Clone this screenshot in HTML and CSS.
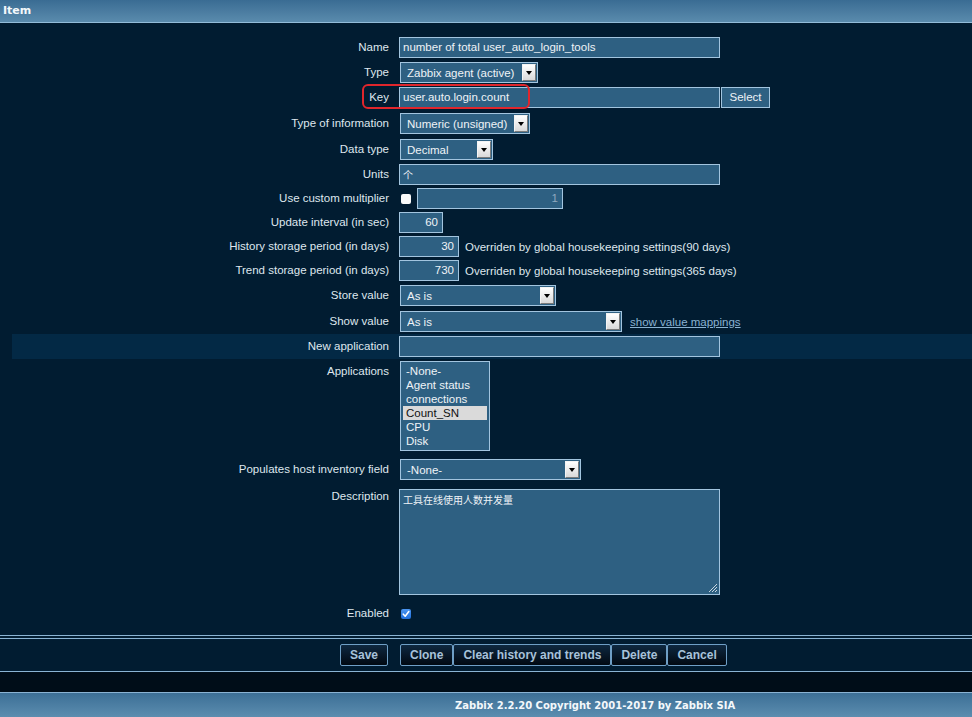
FILE: index.html
```html
<!DOCTYPE html>
<html lang="en">
<head>
<meta charset="utf-8">
<title>Item</title>
<link rel="stylesheet" href="styles.css">
</head>
<body>
<div class="header">Item</div>
<div class="form">
  <div class="row h25">
    <div class="lbl">Name</div>
    <div class="ctl"><div class="inp wide">number of total user_auto_login_tools</div></div>
  </div>
  <div class="row h25">
    <div class="lbl">Type</div>
    <div class="ctl"><div class="sel w138"><span>Zabbix agent (active)</span><span class="arr"><i></i></span></div></div>
  </div>
  <div class="row h26 key">
    <div class="lbl">Key</div>
    <div class="ctl"><div class="inp wide">user.auto.login.count</div><div class="btn-sel">Select</div></div>
    <div class="mark"></div>
  </div>
  <div class="row h26">
    <div class="lbl">Type of information</div>
    <div class="ctl"><div class="sel w130"><span>Numeric (unsigned)</span><span class="arr"><i></i></span></div></div>
  </div>
  <div class="row h25">
    <div class="lbl">Data type</div>
    <div class="ctl"><div class="sel w93"><span>Decimal</span><span class="arr"><i></i></span></div></div>
  </div>
  <div class="row h24">
    <div class="lbl">Units</div>
    <div class="ctl"><div class="inp wide"><span class="cjk">个</span></div></div>
  </div>
  <div class="row h24">
    <div class="lbl">Use custom multiplier</div>
    <div class="ctl"><span class="cb"></span><div class="inp num w146 dis">1</div></div>
  </div>
  <div class="row h24">
    <div class="lbl">Update interval (in sec)</div>
    <div class="ctl"><div class="inp num w44">60</div></div>
  </div>
  <div class="row h24">
    <div class="lbl">History storage period (in days)</div>
    <div class="ctl"><div class="inp num w60">30</div><span class="note">Overriden by global housekeeping settings(90 days)</span></div>
  </div>
  <div class="row h25">
    <div class="lbl">Trend storage period (in days)</div>
    <div class="ctl"><div class="inp num w60">730</div><span class="note">Overriden by global housekeeping settings(365 days)</span></div>
  </div>
  <div class="row h26">
    <div class="lbl">Store value</div>
    <div class="ctl"><div class="sel w156"><span>As is</span><span class="arr"><i></i></span></div></div>
  </div>
  <div class="row h25">
    <div class="lbl">Show value</div>
    <div class="ctl"><div class="sel w222"><span>As is</span><span class="arr"><i></i></span></div><a class="link" href="#">show value mappings</a></div>
  </div>
  <div class="row h25 hl">
    <div class="lbl">New application</div>
    <div class="ctl"><div class="inp wide"></div></div>
  </div>
  <div class="row h98">
    <div class="lbl lbl-apps">Applications</div>
    <div class="ctl tall">
      <div class="list">
        <div class="opt">-None-</div>
        <div class="opt">Agent status</div>
        <div class="opt">connections</div>
        <div class="opt on">Count_SN</div>
        <div class="opt">CPU</div>
        <div class="opt">Disk</div>
      </div>
    </div>
  </div>
  <div class="row h30">
    <div class="lbl">Populates host inventory field</div>
    <div class="ctl"><div class="sel w181"><span>-None-</span><span class="arr"><i></i></span></div></div>
  </div>
  <div class="row h114">
    <div class="lbl lbl-desc">Description</div>
    <div class="ctl tall">
      <div class="area"><span class="cjk">工具在线使用人数并发量</span>
        <svg class="grip" width="10" height="10" viewBox="0 0 10 10"><path d="M9 1L1 9M9 4L4 9M9 7L7 9" stroke="#c9d6e0" stroke-width="1"/></svg>
      </div>
    </div>
  </div>
  <div class="row h24">
    <div class="lbl">Enabled</div>
    <div class="ctl"><span class="cb on"><svg width="10" height="10" viewBox="0 0 10 10"><path d="M2.3 5.2L4.2 7.2L7.8 2.6" fill="none" stroke="#fff" stroke-width="1.6" stroke-linecap="round" stroke-linejoin="round"/></svg></span></div>
  </div>
</div>
<div class="sep"></div>
<div class="btnbar">
  <span class="b">Save</span>
  <div class="bgroup">
    <span class="b">Clone</span><span class="b">Clear history and trends</span><span class="b">Delete</span><span class="b">Cancel</span>
  </div>
</div>
<div class="dark"></div>
<div class="footer">Zabbix 2.2.20 Copyright 2001-2017 by Zabbix SIA</div>
</body>
</html>
```
FILE: styles.css
```css
html, body {
  margin: 0;
  padding: 0;
}
body {
  width: 972px;
  height: 717px;
  overflow: hidden;
  background: #011c31;
  font-family: "Liberation Sans", Arial, sans-serif;
  font-size: 11.5px;
  color: #dfe7ee;
}
.header {
  height: 22px;
  line-height: 22px;
  padding-left: 3px;
  background: linear-gradient(#3a6c93, #5a8bad);
  border-bottom: 1px solid #93bcd9;
  color: #f4f8fb;
  font-family: "DejaVu Sans", sans-serif;
  font-weight: bold;
  font-size: 11px;
}
.form {
  padding: 12px 0 10px 12px;
}
.row {
  display: flex;
  align-items: flex-start;
  box-sizing: border-box;
  padding-top: 2px;
  position: relative;
}
.h24 { height: 24px; }
.h25 { height: 25px; }
.h26 { height: 26px; }
.h30 { height: 30px; }
.h98 { height: 98px; }
.h114 { height: 114px; }
.hl { background: #032945; }
.lbl {
  flex: none;
  width: 377px;
  text-align: right;
  line-height: 21px;
  white-space: nowrap;
}
.lbl-apps { line-height: 13px; padding-top: 4px; }
.lbl-desc { line-height: 13px; padding-top: 1px; }
.ctl {
  margin-left: 10px;
  display: flex;
  align-items: center;
  height: 21px;
}
.ctl.tall {
  height: auto;
  align-items: flex-start;
}
.inp {
  box-sizing: border-box;
  height: 21px;
  border: 1px solid #a3c5df;
  background: #2e6082;
  color: #eef3f7;
  padding: 0 3px;
  line-height: 19px;
  white-space: nowrap;
}
.wide { width: 321px; }
.w44 { width: 44px; }
.w60 { width: 60px; }
.w146 { width: 146px; margin-left: 6px; }
.num { text-align: right; padding-right: 4px; }
.dis { color: #8ea9bf; }
.cjk {
  font-family: "Noto Sans CJK SC", sans-serif;
  font-size: 10px;
}
.btn-sel {
  box-sizing: border-box;
  width: 49px;
  height: 21px;
  margin-left: 1px;
  border: 1px solid #a3c5df;
  background: #2e6082;
  color: #eef3f7;
  text-align: center;
  line-height: 19px;
}
.mark {
  position: absolute;
  left: 350px;
  top: -1px;
  width: 168px;
  height: 25px;
  box-sizing: border-box;
  border: 2px solid #e0262c;
  border-radius: 6px;
}
.sel {
  box-sizing: border-box;
  height: 21px;
  margin-left: 1px;
  display: flex;
  align-items: center;
  border: 1px solid #a3c5df;
  background: #2e6082;
  color: #eef3f7;
  padding-left: 6px;
  white-space: nowrap;
}
.sel span:first-child { flex: 1; overflow: hidden; }
.w93 { width: 93px; }
.w130 { width: 130px; }
.w138 { width: 138px; }
.w156 { width: 156px; }
.w181 { width: 181px; }
.w222 { width: 222px; }
.arr {
  flex: none;
  box-sizing: border-box;
  width: 14px;
  height: 17px;
  margin-right: 1px;
  background: linear-gradient(#ffffff, #d9d9d9);
  border: 1px solid;
  border-color: #f4f4f4 #7a7a7a #7a7a7a #f4f4f4;
  display: flex;
  align-items: center;
  justify-content: center;
}
.arr i {
  display: block;
  width: 0;
  height: 0;
  border-left: 3px solid transparent;
  border-right: 3px solid transparent;
  border-top: 4px solid #000;
}
.note { margin-left: 6px; white-space: nowrap; }
.link {
  margin-left: 8px;
  color: #8ab2d2;
  text-decoration: underline;
}
.cb {
  box-sizing: border-box;
  display: inline-block;
  width: 10px;
  height: 10px;
  margin-left: 2px;
  border-radius: 2px;
  background: #fafafa;
}
.cb.on {
  background: linear-gradient(#4b95f0, #1f6fdc);
}
.cb svg { display: block; }
.list {
  box-sizing: border-box;
  width: 90px;
  height: 90px;
  margin-left: 1px;
  border: 1px solid #a3c5df;
  background: #2e6082;
  padding: 2px 2px;
  color: #eef3f7;
}
.opt {
  height: 14px;
  line-height: 14px;
  padding-left: 3px;
  white-space: nowrap;
}
.opt.on {
  background: #dadada;
  color: #111;
}
.area {
  position: relative;
  box-sizing: border-box;
  width: 321px;
  height: 106px;
  border: 1px solid #a3c5df;
  background: #2e6082;
  color: #eef3f7;
  padding: 3px 3px;
  line-height: 14px;
}
.grip {
  position: absolute;
  right: 1px;
  bottom: 1px;
}
.sep {
  height: 2px;
  border-top: 1px solid #8ab3d3;
}
.btnbar {
  box-sizing: border-box;
  height: 34px;
  border-top: 1px solid #8ab3d3;
  border-bottom: 1px solid #8ab3d3;
  padding: 5px 0 0 340px;
  display: flex;
  align-items: flex-start;
}
.bgroup {
  display: flex;
  margin-left: 12px;
}
.b {
  box-sizing: border-box;
  height: 22px;
  line-height: 20px;
  padding: 0 9px;
  border: 1px solid #6f9fc6;
  border-radius: 2px;
  background: linear-gradient(#0e2840, #010912);
  color: #a7c2da;
  font-weight: bold;
  font-size: 12px;
  white-space: nowrap;
}
.dark {
  height: 20px;
  background: #000d18;
  border-bottom: 1px solid #8ab3d3;
}
.footer {
  height: 25px;
  line-height: 25px;
  padding-left: 455px;
  background: linear-gradient(#3c6f96, #5d8eb0);
  color: #f4f8fb;
  font-family: "DejaVu Sans", sans-serif;
  font-weight: bold;
  font-size: 10px;
  white-space: nowrap;
}
```
